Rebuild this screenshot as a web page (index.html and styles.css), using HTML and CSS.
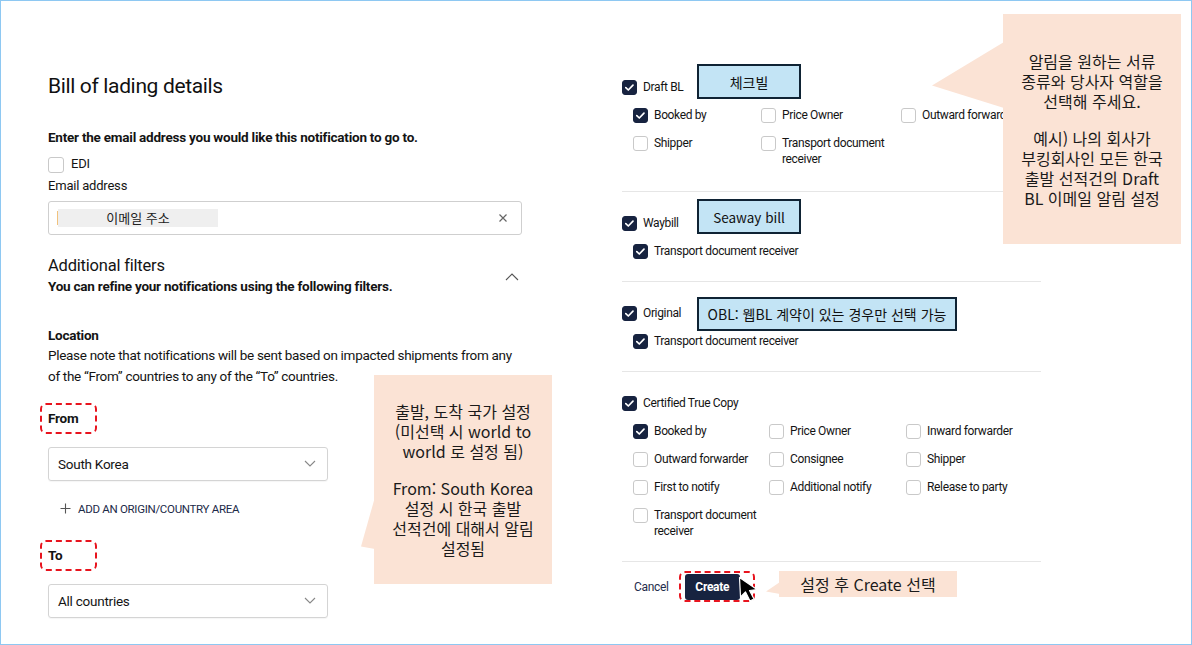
FILE: index.html
```html
<!DOCTYPE html>
<html lang="ko">
<head>
<meta charset="utf-8">
<title>Bill of lading details</title>
<link rel="stylesheet" href="styles.css">
</head>
<body>
<div class="frame">
  <section class="left">
    <h1 class="title">Bill of lading details</h1>
    <p class="strong intro">Enter the email address you would like this notification to go to.</p>
    <label class="cb-row edi"><span class="cb"></span><span>EDI</span></label>
    <div class="field-label">Email address</div>
    <div class="input">
      <span class="mask"><span class="caret"></span>이메일 주소</span>
      <svg class="clear" width="10" height="10" viewBox="0 0 10 10"><path d="M1.5 1.5 L8.5 8.5 M8.5 1.5 L1.5 8.5" stroke="#666" stroke-width="1.2" fill="none"/></svg>
    </div>
    <div class="filters-head">
      <div>
        <h2 class="sub-title">Additional filters</h2>
        <p class="strong">You can refine your notifications using the following filters.</p>
      </div>
      <svg class="chev-up" width="14" height="8" viewBox="0 0 14 8"><path d="M1 7 L7 1 L13 7" stroke="#555" stroke-width="1.1" fill="none"/></svg>
    </div>
    <h3 class="strong loc">Location</h3>
    <p class="note">Please note that notifications will be sent based on impacted shipments from any of the “From” countries to any of the “To” countries.</p>
    <div class="dash-label from">From</div>
    <div class="select"><span>South Korea</span><svg class="chev" width="12" height="7" viewBox="0 0 12 7"><path d="M1 1 L6 6 L11 1" stroke="#888" stroke-width="1.1" fill="none"/></svg></div>
    <div class="add"><svg width="11" height="11" viewBox="0 0 11 11"><path d="M5.5 0.5 V10.5 M0.5 5.5 H10.5" stroke="#555" stroke-width="1.1"/></svg><span>ADD AN ORIGIN/COUNTRY AREA</span></div>
    <div class="dash-label to">To</div>
    <div class="select"><span>All countries</span><svg class="chev" width="12" height="7" viewBox="0 0 12 7"><path d="M1 1 L6 6 L11 1" stroke="#888" stroke-width="1.1" fill="none"/></svg></div>
  </section>

  <section class="right">
    <div class="doc doc-draft">
      <div class="doc-head">
        <label class="cb-row"><span class="cb on"></span><span>Draft BL</span></label>
        <span class="tag tag-draft">체크빌</span>
      </div>
      <div class="opts opts-draft">
        <label class="cb-row"><span class="cb on"></span><span>Booked by</span></label>
        <label class="cb-row"><span class="cb"></span><span>Price Owner</span></label>
        <label class="cb-row nowrap"><span class="cb"></span><span>Outward forwarder</span></label>
        <label class="cb-row"><span class="cb"></span><span>Shipper</span></label>
        <label class="cb-row"><span class="cb"></span><span>Transport document receiver</span></label>
      </div>
    </div>
    <div class="doc">
      <div class="doc-head">
        <label class="cb-row"><span class="cb on"></span><span>Waybill</span></label>
        <span class="tag tag-way">Seaway bill</span>
      </div>
      <div class="opts opts-single">
        <label class="cb-row"><span class="cb on"></span><span>Transport document receiver</span></label>
      </div>
    </div>
    <div class="doc">
      <div class="doc-head">
        <label class="cb-row"><span class="cb on"></span><span>Original</span></label>
        <span class="tag tag-obl">OBL: 웹BL 계약이 있는 경우만 선택 가능</span>
      </div>
      <div class="opts opts-single">
        <label class="cb-row"><span class="cb on"></span><span>Transport document receiver</span></label>
      </div>
    </div>
    <div class="doc">
      <div class="doc-head">
        <label class="cb-row"><span class="cb on"></span><span>Certified True Copy</span></label>
      </div>
      <div class="opts opts-ctc">
        <label class="cb-row"><span class="cb on"></span><span>Booked by</span></label>
        <label class="cb-row"><span class="cb"></span><span>Price Owner</span></label>
        <label class="cb-row"><span class="cb"></span><span>Inward forwarder</span></label>
        <label class="cb-row"><span class="cb"></span><span>Outward forwarder</span></label>
        <label class="cb-row"><span class="cb"></span><span>Consignee</span></label>
        <label class="cb-row"><span class="cb"></span><span>Shipper</span></label>
        <label class="cb-row"><span class="cb"></span><span>First to notify</span></label>
        <label class="cb-row"><span class="cb"></span><span>Additional notify</span></label>
        <label class="cb-row"><span class="cb"></span><span>Release to party</span></label>
        <label class="cb-row"><span class="cb"></span><span>Transport document receiver</span></label>
      </div>
    </div>
    <div class="actions">
      <span class="cancel">Cancel</span>
      <span class="dash-btn"><span class="create">Create</span></span>
      <svg class="pointer" width="22" height="27" viewBox="0 0 22 27"><path d="M1.5 1.5 L2.5 21 L7.5 16 L12 25 L16 23 L11.5 14.5 L19 13.5 Z" fill="#000" stroke="#fff" stroke-width="1.2" stroke-linejoin="round"/></svg>
    </div>
  </section>

  <div class="callout callout-doc">
    <p>알림을 원하는 서류<br>종류와 당사자 역할을<br>선택해 주세요.</p>
    <p>예시) 나의 회사가<br>부킹회사인 모든 한국<br>출발 선적건의 Draft<br>BL 이메일 알림 설정</p>
  </div>
  <div class="callout callout-loc">
    <p>출발, 도착 국가 설정<br>(미선택 시 world to<br>world 로 설정 됨)</p>
    <p>From: South Korea<br>설정 시 한국 출발<br>선적건에 대해서 알림<br>설정됨</p>
  </div>
  <div class="callout callout-create">
    <p>설정 후 Create 선택</p>
  </div>
</div>
</body>
</html>
```

FILE: styles.css
```css
* { box-sizing: border-box; }
html, body { margin: 0; padding: 0; }
body {
  width: 1192px;
  height: 645px;
  overflow: hidden;
  background: #fff;
  font-family: "Roboto", "Noto Sans CJK KR", sans-serif;
  color: #141414;
}
p, h1, h2, h3 { margin: 0; }

.frame {
  position: relative;
  width: 1192px;
  height: 645px;
  border: 1px solid #8ec8f2;
  display: flex;
}

/* ---------- left column ---------- */
.left {
  flex: 0 0 621px;
  padding: 71px 99px 0 47px;
  display: flex;
  flex-direction: column;
  align-items: flex-start;
}
.title {
  font-size: 21px;
  font-weight: 400;
  line-height: 28px;
  letter-spacing: -0.35px;
  color: #111;
}
.strong {
  font-size: 13.5px;
  font-weight: 700;
  line-height: 18px;
  letter-spacing: -0.23px;
}
.intro { margin-top: 28px; }

.cb-row {
  display: flex;
  align-items: flex-start;
  gap: 6px;
  font-size: 12px;
  line-height: 16px;
  letter-spacing: -0.35px;
}
.nowrap { white-space: nowrap; }
.cb {
  flex: 0 0 15px;
  width: 15px;
  height: 15px;
  margin-top: 0.5px;
  border: 1px solid #c9c9c9;
  border-radius: 3px;
  background: #fff;
}
.cb.on {
  border-color: #172340;
  background: #172340 url("data:image/svg+xml,%3Csvg xmlns='http://www.w3.org/2000/svg' width='15' height='15' viewBox='0 0 15 15'%3E%3Cpath d='M3.8 7.6 L6.3 10 L11 5.2' stroke='white' stroke-width='1.7' fill='none' stroke-linecap='round' stroke-linejoin='round'/%3E%3C/svg%3E") center / 15px 15px no-repeat;
}

.edi {
  margin-top: 10px;
  align-items: center;
  gap: 7px;
  font-size: 13px;
  letter-spacing: -0.2px;
}
.edi .cb { flex-basis: 16px; width: 16px; height: 16px; }
.field-label {
  margin-top: 4px;
  font-size: 13px;
  line-height: 18px;
  letter-spacing: -0.2px;
}

.input {
  margin-top: 6px;
  width: 474px;
  height: 34px;
  border: 1px solid #cfcfcf;
  border-radius: 3px;
  display: flex;
  align-items: center;
  justify-content: space-between;
  padding: 0 13px 0 9px;
}
.mask {
  position: relative;
  width: 160px;
  height: 18px;
  background: #efefef;
  text-align: center;
  font-family: "Noto Sans CJK KR", sans-serif;
  font-size: 13px;
  line-height: 18px;
  color: #222;
}
.caret {
  position: absolute;
  left: -1px;
  top: 2px;
  width: 1px;
  height: 14px;
  background: #f1c27d;
}

.filters-head {
  margin-top: 20px;
  width: 474px;
  display: flex;
  justify-content: space-between;
  align-items: flex-start;
}
.sub-title {
  font-size: 16.5px;
  font-weight: 400;
  line-height: 22px;
  letter-spacing: -0.2px;
}
.chev-up { margin-top: 18px; margin-right: 3px; }

.loc { margin-top: 31px; }
.note {
  margin-top: 1px;
  width: 474px;
  font-size: 13.5px;
  line-height: 21px;
  letter-spacing: -0.3px;
}

.dash-label {
  margin-left: -8px;
  width: 57px;
  height: 31px;
  padding-left: 6px;
  border: 2px dashed #e8141e;
  border-radius: 6px;
  font-size: 13.5px;
  font-weight: 700;
  line-height: 27px;
  letter-spacing: -0.2px;
}
.from { margin-top: 16px; }
.to { margin-top: 23px; }

.select {
  margin-top: 13px;
  width: 280px;
  height: 34px;
  border: 1px solid #d4d4d4;
  border-radius: 3px;
  box-shadow: 0 1px 1px rgba(0,0,0,0.04);
  display: flex;
  align-items: center;
  justify-content: space-between;
  padding: 0 11px 0 9px;
  font-size: 13.5px;
  letter-spacing: -0.25px;
}
.add {
  margin-top: 20px;
  margin-left: 12px;
  display: flex;
  align-items: center;
  gap: 7px;
  font-size: 11.5px;
  line-height: 16px;
  letter-spacing: -0.3px;
  color: #1c2a48;
}

/* ---------- right column ---------- */
.right {
  flex: 0 0 418px;
  padding-top: 55px;
}
.doc {
  padding: 23px 0 22px;
}
.doc-draft { padding-bottom: 24px; }
.doc + .doc, .actions { border-top: 1px solid #e6e6e6; }
.doc-head {
  position: relative;
  display: flex;
}
.opts {
  margin-top: 12px;
  margin-left: 11px;
  display: grid;
  row-gap: 12px;
}
.opts-draft { grid-template-columns: 128px 140px 140px; }
.opts-ctc { grid-template-columns: 136px 137px 134px; }
.opts-single { grid-template-columns: 1fr; }

.tag {
  position: absolute;
  left: 75px;
  height: 35px;
  display: flex;
  align-items: center;
  justify-content: center;
  background: #c3e4f5;
  border: 2px solid #0f2334;
  font-family: "Noto Sans CJK KR", sans-serif;
  font-size: 14px;
  color: #111;
}
.tag-draft { top: -15px; width: 104px; }
.tag-way { top: -16px; width: 104px; font-size: 13.5px; }
.tag-obl { top: -8px; width: 260px; height: 34px; }

.actions {
  position: relative;
  display: flex;
  align-items: center;
  padding: 9px 0 0 12px;
}
.cancel {
  font-size: 12px;
  letter-spacing: -0.3px;
  color: #1f2d4d;
}
.dash-btn {
  margin-left: 10px;
  width: 76px;
  height: 31px;
  border: 2px dashed #e8141e;
  border-radius: 6px;
  padding: 1px 0 0 4px;
}
.create {
  display: flex;
  align-items: center;
  justify-content: center;
  width: 55px;
  height: 26px;
  background: #172340;
  border-radius: 3px;
  color: #fff;
  font-size: 12px;
  font-weight: 700;
  letter-spacing: -0.3px;
}
.pointer {
  position: absolute;
  left: 116px;
  top: 14px;
}

/* ---------- callouts ---------- */
.callout {
  position: absolute;
  background: #fbe3d5;
  font-family: "Noto Sans CJK KR", sans-serif;
  font-size: 16px;
  line-height: 20px;
  color: #1a1a1a;
  text-align: center;
  display: flex;
  flex-direction: column;
  justify-content: center;
  gap: 17px;
}
.callout::before {
  content: "";
  position: absolute;
  background: #fbe3d5;
}
.callout-doc {
  left: 1002px;
  top: 13px;
  width: 178px;
  height: 230px;
}
.callout-doc::before {
  left: -71px;
  top: 28px;
  width: 72px;
  height: 66px;
  clip-path: polygon(100% 0, 0 66%, 100% 100%);
}
.callout-loc {
  left: 373px;
  top: 374px;
  width: 178px;
  height: 209px;
}
.callout-loc::before {
  left: -13px;
  top: 122px;
  width: 14px;
  height: 52px;
  clip-path: polygon(100% 0, 0 95%, 100% 100%);
}
.callout-create {
  left: 778px;
  top: 570px;
  width: 178px;
  height: 26px;
  line-height: 26px;
}
.callout-create::before {
  left: -13px;
  top: 11px;
  width: 14px;
  height: 12px;
  clip-path: polygon(100% 0, 0 80%, 100% 100%);
}
```
